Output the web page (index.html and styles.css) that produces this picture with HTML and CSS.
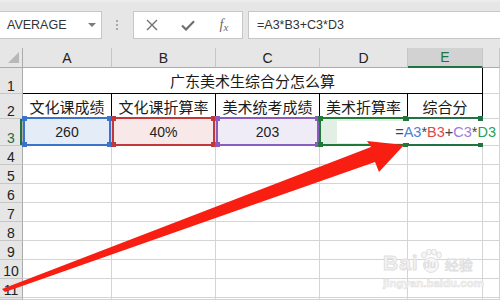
FILE: index.html
```html
<!DOCTYPE html>
<html lang="zh-CN">
<head>
<meta charset="utf-8">
<title>广东美术生综合分怎么算</title>
<link rel="stylesheet" href="styles.css">
</head>
<body>
<div class="toolbar">
  <div class="namebox"><span class="nb-text">AVERAGE</span><span class="dd"></span></div>
  <div class="grip"><i></i><i></i><i></i></div>
  <div class="btns">
    <span class="btn"><svg width="12" height="12" viewBox="0 0 12 12"><path d="M1 1L11 11M11 1L1 11" stroke="#707070" stroke-width="1.4" fill="none"/></svg></span>
    <span class="btn"><svg width="14" height="11" viewBox="0 0 14 11"><path d="M1 5.5L5 9.5L13 1.2" stroke="#707070" stroke-width="2.2" fill="none"/></svg></span>
    <span class="btn fx"><i>f</i><i class="fx-x">x</i></span>
  </div>
  <div class="formula">=A3*B3+C3*D3</div>
</div>

<div class="sheet">
  <div class="corner"><svg width="12" height="12" viewBox="0 0 12 12"><path d="M11 0V11H0Z" fill="#b8b8b8"/></svg></div>
  <div class="h">A</div><div class="h">B</div><div class="h">C</div><div class="h">D</div><div class="h hsel">E</div><div class="h"></div>

  <div class="r">1</div><div class="c title">广东美术生综合分怎么算</div><div class="c"></div>

  <div class="r">2</div>
  <div class="c th">文化课成绩</div><div class="c th">文化课折算率</div><div class="c th">美术统考成绩</div><div class="c th">美术折算率</div><div class="c th">综合分</div><div class="c"></div>

  <div class="r rsel">3</div>
  <div class="c rf fill-blue">260<span class="box blue"><i class="tl"></i><i class="tr"></i><i class="bl"></i><i class="br"></i></span></div>
  <div class="c rf fill-red">40%<span class="box red"><i class="tl"></i><i class="tr"></i><i class="bl"></i><i class="br"></i></span></div>
  <div class="c rf fill-purple">203<span class="box purple"><i class="tl"></i><i class="tr"></i><i class="bl"></i><i class="br"></i></span></div>
  <div class="c rf fill-green"><span class="box green"><i class="tl"></i><i class="tr"></i><i class="bl"></i><i class="br"></i></span></div>
  <div class="c rf"><span class="box active"><i class="tr"></i><i class="br"></i></span><span class="editor"><span class="op">=</span><span class="k-blue">A3</span><span class="op">*</span><span class="k-red">B3</span><span class="op">+</span><span class="k-purple">C3</span><span class="op">*</span><span class="k-green">D3</span></span></div>
  <div class="c"></div>

  <div class="r">4</div><div class="c"></div><div class="c"></div><div class="c"></div><div class="c"></div><div class="c"></div><div class="c"></div>
  <div class="r">5</div><div class="c"></div><div class="c"></div><div class="c"></div><div class="c"></div><div class="c"></div><div class="c"></div>
  <div class="r">6</div><div class="c"></div><div class="c"></div><div class="c"></div><div class="c"></div><div class="c"></div><div class="c"></div>
  <div class="r">7</div><div class="c"></div><div class="c"></div><div class="c"></div><div class="c"></div><div class="c"></div><div class="c"></div>
  <div class="r">8</div><div class="c"></div><div class="c"></div><div class="c"></div><div class="c"></div><div class="c"></div><div class="c"></div>
  <div class="r">9</div><div class="c"></div><div class="c"></div><div class="c"></div><div class="c"></div><div class="c"></div><div class="c"></div>
  <div class="r">10</div><div class="c"></div><div class="c"></div><div class="c"></div><div class="c"></div><div class="c"></div><div class="c"></div>
  <div class="r">11</div><div class="c"></div><div class="c"></div><div class="c"></div><div class="c"></div><div class="c"></div><div class="c"></div>
  <div class="r"></div><div class="c"></div><div class="c"></div><div class="c"></div><div class="c"></div><div class="c"></div><div class="c"></div>
</div>

<div class="wm">
  <div class="wm-top">
    <span class="wm-bai">Bai</span>
    <span class="wm-paw">
      <svg width="22" height="24" viewBox="0 0 22 24"><g fill="#f6f6f6" stroke="#e0e0e0" stroke-width="1"><ellipse cx="4" cy="6" rx="2.5" ry="3"/><ellipse cx="9" cy="3" rx="2.5" ry="3"/><ellipse cx="14" cy="3" rx="2.5" ry="3"/><ellipse cx="19" cy="6" rx="2.5" ry="3"/><circle cx="11" cy="16" r="7.5"/></g></svg>
      <span class="wm-du">du</span>
    </span>
    <span class="wm-jy">经验</span>
  </div>
  <div class="wm-url">jingyan.baidu.com</div>
</div>

<svg class="arrow" width="500" height="300" viewBox="0 0 500 300"><polygon points="2,289 371,147 367,141 404,145 379,172 375,162 5,292" fill="#f81e12"/></svg>
</body>
</html>
```

FILE: styles.css
```css
html, body {
  margin: 0;
  padding: 0;
}

body {
  width: 500px;
  height: 300px;
  overflow: hidden;
  position: relative;
  background: #fff;
  font-family: "Liberation Sans", "Noto Sans CJK SC", sans-serif;
  color: #222;
}

/* ---------- formula toolbar ---------- */
.toolbar {
  height: 48px;
  box-sizing: border-box;
  background: #e6e6e6;
  border-top: 2px solid #ececec;
  padding-top: 9px;
  display: flex;
  align-items: flex-start;
}

.namebox {
  margin-left: -1px;
  width: 103px;
  height: 28px;
  box-sizing: border-box;
  background: #fff;
  border: 1px solid #c6c6c6;
  display: flex;
  align-items: center;
  padding-left: 7px;
  padding-right: 5px;
  font-size: 12.5px;
  color: #333;
}

.nb-text {
  flex: 1;
}

.dd {
  width: 0;
  height: 0;
  border-left: 4px solid transparent;
  border-right: 4px solid transparent;
  border-top: 4px solid #7a7a7a;
}

.grip {
  margin-left: 14px;
  margin-top: 9px;
  display: flex;
  flex-direction: column;
  gap: 2px;
}

.grip i {
  display: block;
  width: 2px;
  height: 2px;
  background: #a8a8a8;
}

.btns {
  margin-left: 15px;
  height: 28px;
  box-sizing: border-box;
  background: #fff;
  border: 1px solid #c6c6c6;
  display: flex;
}

.btn {
  width: 36px;
  display: flex;
  align-items: center;
  justify-content: center;
}

.fx {
  font-family: "Liberation Serif", serif;
  color: #6a6a6a;
  font-size: 14px;
}

.fx i {
  font-style: italic;
}

.fx-x {
  font-size: 11px;
  margin-top: 4px;
}

.formula {
  margin-left: 5px;
  margin-right: -2px;
  flex: 1;
  height: 28px;
  box-sizing: border-box;
  background: #fff;
  border: 1px solid #c6c6c6;
  display: flex;
  align-items: center;
  padding-left: 8px;
  font-size: 12.5px;
  color: #333;
}

/* ---------- sheet ---------- */
.sheet {
  height: 252px;
  overflow: hidden;
  display: grid;
  grid-template-columns: 23px 89px 104px 104px 88px 75px 1fr;
  grid-template-rows: 20px 26px 25px 27px repeat(8, 19px) 1fr;
}

.sheet > div {
  box-sizing: border-box;
  min-width: 0;
  min-height: 0;
  display: flex;
  align-items: center;
  justify-content: center;
}

.corner {
  background: #e6e6e6;
  border-right: 1px solid #ababab;
  border-bottom: 1px solid #ababab;
  align-items: flex-end !important;
  justify-content: flex-end !important;
  padding: 0 2px 3px 0;
}

.corner svg {
  display: block;
}

.h {
  background: #e6e6e6;
  border-right: 1px solid #c6c6c6;
  border-bottom: 1px solid #ababab;
  font-size: 14px;
  color: #222;
}

.hsel {
  background: #d2d2d2;
  border-bottom: 2px solid #217346;
  color: #217346;
}

.r {
  background: #e6e6e6;
  border-right: 1px solid #ababab;
  border-bottom: 1px solid #c6c6c6;
  font-size: 14px;
  line-height: 14px;
  color: #222;
  align-items: flex-end !important;
}

.rsel {
  color: #2b6a45;
  box-shadow: inset -2px 0 #217346;
}

.c {
  border-right: 1px solid #d4d4d4;
  border-bottom: 1px solid #d4d4d4;
  font-size: 14px;
  color: #222;
}

.title {
  grid-column: 2 / 7;
  border-right-color: #000;
  border-bottom-color: #000;
  font-family: "Noto Sans CJK SC", sans-serif;
  font-size: 15px;
  color: #1a1a1a;
}

.th {
  border-right-color: #000;
  border-bottom-color: #000;
  font-family: "Noto Sans CJK SC", sans-serif;
  font-size: 15px;
  color: #1a1a1a;
  white-space: nowrap;
}

/* row 3 reference highlights */
.rf {
  position: relative;
}

.fill-blue { background: #e4ecf7; }
.fill-red { background: #f9e8e8; }
.fill-purple { background: #efebf7; }
.fill-green { background: #e2efe5; }

.box {
  position: absolute;
  top: -2px;
  left: 0;
  right: 0;
  bottom: -1px;
  border: 2px solid;
  z-index: 1;
}

.box.blue { border-color: #3d72c9; }
.box.red { border-color: #c1373c; }
.box.purple { border-color: #8a5cc0; }
.box.green { border-color: #1f7a37; left: -1px; }
.box.active { border-color: #217346; left: -1px; }

.box i {
  position: absolute;
  width: 5px;
  height: 5px;
}

.box.blue i { background: #3d72c9; }
.box.red i { background: #c1373c; }
.box.purple i { background: #8a5cc0; }
.box.green i { background: #1f7a37; }
.box.active i { background: #217346; }

.box .tl { top: -3px; left: -3px; }
.box .tr { top: -3px; right: -3px; }
.box .bl { bottom: -3px; left: -3px; }
.box .br { bottom: -3px; right: -3px; }

.editor {
  position: absolute;
  z-index: 2;
  top: 2px;
  bottom: 2px;
  left: -71px;
  width: 160px;
  box-sizing: border-box;
  background: #fff;
  display: flex;
  align-items: center;
  justify-content: flex-end;
  padding-right: 1px;
  font-size: 14.5px;
  white-space: nowrap;
}

.op { color: #444; }
.k-blue { color: #4a7fd6; }
.k-red { color: #e0474c; }
.k-purple { color: #a27bd8; }
.k-green { color: #28a057; }

/* ---------- watermark ---------- */
.wm {
  position: absolute;
  left: 383px;
  top: 247px;
  width: 90px;
  color: #f4f4f4;
}

.wm-top {
  display: flex;
  align-items: flex-end;
  height: 26px;
}

.wm-bai {
  font-family: "Liberation Sans", sans-serif;
  font-weight: bold;
  font-size: 21px;
  line-height: 21px;
  letter-spacing: 1px;
  -webkit-text-stroke: 1px #e0e0e0;
}

.wm-paw {
  position: relative;
  width: 22px;
  height: 24px;
  margin-left: 1px;
}

.wm-paw svg {
  display: block;
}

.wm-du {
  position: absolute;
  left: 4px;
  top: 10px;
  font-size: 10px;
  font-weight: bold;
  color: #dedede;
}

.wm-jy {
  margin-left: 3px;
  font-family: "Noto Sans CJK SC", sans-serif;
  font-size: 14px;
  line-height: 18px;
  -webkit-text-stroke: 0.8px #e0e0e0;
}

.wm-url {
  margin-top: 4px;
  font-size: 11.5px;
  font-weight: bold;
  color: #f4f4f4;
  -webkit-text-stroke: 0.6px #e2e2e2;
  white-space: nowrap;
}

/* ---------- annotation arrow ---------- */
.arrow {
  position: absolute;
  left: 0;
  top: 0;
  pointer-events: none;
  z-index: 5;
}
```
